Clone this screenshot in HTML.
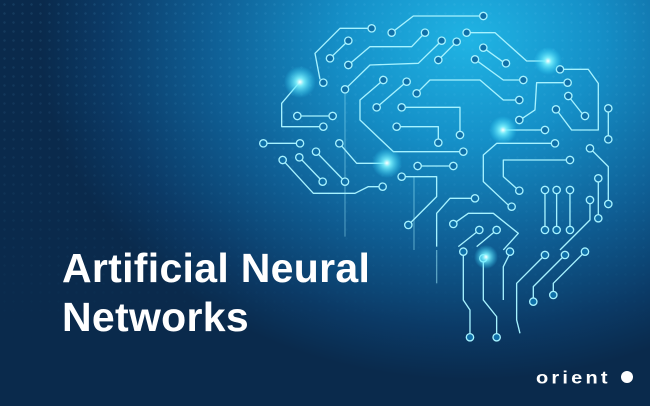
<!DOCTYPE html>
<html><head><meta charset="utf-8"><style>
html,body{margin:0;padding:0}
body{width:650px;height:406px;overflow:hidden;position:relative;font-family:"Liberation Sans",sans-serif;
background:radial-gradient(ellipse 430px 340px at 470px 40px,#20b4e4 0%,#1590c8 30%,#0f5f95 60%,#0b3a66 85%,#0a2a4c 100%),#0a2a4c;}
.dots{position:absolute;left:0;top:0;width:650px;height:406px;
background-image:radial-gradient(circle,rgba(120,210,255,.10) 1px,transparent 1.5px);background-size:9px 9px;
-webkit-mask-image:linear-gradient(180deg,#000 0%,rgba(0,0,0,.4) 60%,transparent 85%);}
svg{position:absolute;left:0;top:0}
.t{position:absolute;left:62px;color:#fff;font-weight:bold;font-size:41px;letter-spacing:0.3px;white-space:nowrap}
.logo{position:absolute;left:536px;top:367px;color:#fff;font-weight:bold;font-size:20px;letter-spacing:3.2px;transform:scaleY(0.9)}
.dot{position:absolute;left:621px;top:371px;width:12px;height:12px;border-radius:50%;background:#fff}
</style></head><body>
<div class="dots"></div>
<svg width="650" height="406" viewBox="0 0 650 406">
<defs>
<radialGradient id="g"><stop offset="0" stop-color="#fff"/><stop offset=".25" stop-color="#7ff4ff" stop-opacity=".9"/><stop offset="1" stop-color="#30d8ff" stop-opacity="0"/></radialGradient>
</defs>
<g transform="translate(250,0) scale(0.3333)" fill="none" stroke="#a6f2ff" stroke-width="4" stroke-linejoin="round">
<path d="M425,98 L490,48 L690,48"/>
<path d="M355,85 L270,85 L195,160 L210,238"/>
<path d="M295,122 L240,175"/>
<path d="M525,98 L485,140 L360,140 L295,195"/>
<path d="M575,122 L505,190 L360,195 L285,268"/>
<path d="M285,278 L285,710" stroke-opacity=".35"/>
<path d="M620,125 L565,180"/>
<path d="M660,98 L735,98 L830,183 L885,183"/>
<path d="M700,143 L765,190"/>
<path d="M675,178 L760,240 L810,240"/>
<path d="M940,208 L1015,208 L1045,250 L1045,390 L965,390 L920,330"/>
<path d="M945,248 L860,248 L855,330 L810,360"/>
<path d="M955,288 L1000,345"/>
<path d="M1075,325 L1075,415"/>
<path d="M150,245 L95,310 L95,380 L210,380"/>
<path d="M142,348 L245,348"/>
<path d="M40,430 L150,430"/>
<path d="M400,240 L330,300 L330,360 L430,455 L630,455"/>
<path d="M470,245 L380,322"/>
<path d="M500,280 L540,240 L690,240 L760,300 L800,300"/>
<path d="M455,322 L630,322 L630,400"/>
<path d="M440,380 L565,380 L565,425"/>
<path d="M760,390 L885,390"/>
<path d="M268,430 L320,490 L410,490"/>
<path d="M98,480 L190,580 L315,580 L355,560 L390,560"/>
<path d="M148,472 L218,545"/>
<path d="M198,455 L285,545"/>
<path d="M503,498 L610,498"/>
<path d="M455,530 L560,530 L560,590 L475,675"/>
<path d="M905,430 L740,430 L700,465 L700,545 L780,620"/>
<path d="M950,480 L760,480 L760,530 L805,570"/>
<path d="M1020,445 L1075,500 L1075,610"/>
<path d="M1045,535 L1045,655"/>
<path d="M885,570 L885,690 M920,570 L920,690 M960,570 L960,690"/>
<path d="M675,595 L600,595 L560,640 L560,740"/>
<path d="M610,672 L655,640 L730,640 L805,700 L760,750"/>
<path d="M688,690 L625,740 M740,690 L680,740"/>
<path d="M1020,600 L1020,660 L930,750"/>
<path d="M492,530 L492,750" stroke-opacity=".4"/>
<path d="M640,760 L640,900 L660,930 L660,1010"/>
<path d="M700,780 L700,900 L740,950 L740,1010"/>
<path d="M880,770 L800,850 L800,960 L810,1000"/>
<path d="M940,770 L850,860 L850,900"/>
<path d="M1000,760 L910,850 L910,880"/>
<path d="M780,760 L760,800 L760,900"/>
<path d="M560,750 L560,850" stroke-opacity=".5"/>
<g fill="#0f6fa8">
<circle cx="700" cy="48" r="11"/><circle cx="425" cy="98" r="11"/><circle cx="365" cy="85" r="11"/><circle cx="220" cy="248" r="11"/>
<circle cx="295" cy="122" r="11"/><circle cx="240" cy="175" r="11"/><circle cx="525" cy="98" r="11"/><circle cx="295" cy="195" r="11"/>
<circle cx="575" cy="122" r="11"/><circle cx="285" cy="268" r="11"/><circle cx="620" cy="125" r="11"/><circle cx="565" cy="180" r="11"/>
<circle cx="650" cy="98" r="11"/><circle cx="700" cy="143" r="11"/><circle cx="768" cy="190" r="11"/><circle cx="675" cy="178" r="11"/>
<circle cx="820" cy="240" r="11"/><circle cx="930" cy="208" r="11"/><circle cx="918" cy="328" r="11"/><circle cx="953" cy="248" r="11"/>
<circle cx="808" cy="360" r="11"/><circle cx="955" cy="288" r="11"/><circle cx="1005" cy="348" r="11"/><circle cx="1075" cy="325" r="11"/>
<circle cx="1075" cy="418" r="11"/><circle cx="220" cy="380" r="11"/><circle cx="142" cy="348" r="11"/><circle cx="248" cy="348" r="11"/>
<circle cx="40" cy="430" r="11"/><circle cx="150" cy="430" r="11"/><circle cx="400" cy="240" r="11"/><circle cx="640" cy="455" r="11"/>
<circle cx="470" cy="245" r="11"/><circle cx="380" cy="322" r="11"/><circle cx="500" cy="280" r="11"/><circle cx="808" cy="300" r="11"/>
<circle cx="455" cy="322" r="11"/><circle cx="630" cy="405" r="11"/><circle cx="440" cy="380" r="11"/><circle cx="565" cy="428" r="11"/>
<circle cx="885" cy="390" r="11"/><circle cx="268" cy="430" r="11"/><circle cx="98" cy="480" r="11"/><circle cx="398" cy="560" r="11"/>
<circle cx="148" cy="472" r="11"/><circle cx="218" cy="545" r="11"/><circle cx="198" cy="455" r="11"/><circle cx="285" cy="545" r="11"/>
<circle cx="503" cy="498" r="11"/><circle cx="610" cy="498" r="11"/><circle cx="455" cy="530" r="11"/><circle cx="475" cy="675" r="11"/>
<circle cx="915" cy="430" r="11"/><circle cx="785" cy="620" r="11"/><circle cx="960" cy="480" r="11"/><circle cx="808" cy="572" r="11"/>
<circle cx="1020" cy="445" r="11"/><circle cx="1075" cy="612" r="11"/><circle cx="1045" cy="535" r="11"/><circle cx="1045" cy="655" r="11"/>
<circle cx="885" cy="570" r="11"/><circle cx="885" cy="690" r="11"/><circle cx="920" cy="570" r="11"/><circle cx="920" cy="690" r="11"/>
<circle cx="960" cy="570" r="11"/><circle cx="960" cy="690" r="11"/><circle cx="675" cy="595" r="11"/><circle cx="610" cy="672" r="11"/>
<circle cx="688" cy="690" r="11"/><circle cx="740" cy="690" r="11"/><circle cx="1020" cy="600" r="11"/>
<circle cx="640" cy="755" r="11"/><circle cx="700" cy="775" r="11"/><circle cx="885" cy="765" r="11"/><circle cx="945" cy="765" r="11"/>
<circle cx="1005" cy="755" r="11"/><circle cx="780" cy="755" r="11"/><circle cx="850" cy="905" r="11"/><circle cx="910" cy="885" r="11"/>
<circle cx="660" cy="1012" r="11"/><circle cx="740" cy="1012" r="11"/>
</g>
</g>
<circle cx="300" cy="82" r="16" fill="url(#g)"/>
<circle cx="548" cy="61" r="14" fill="url(#g)"/>
<circle cx="503" cy="130" r="14" fill="url(#g)"/>
<circle cx="387" cy="163" r="15" fill="url(#g)"/>
<circle cx="486" cy="257" r="12" fill="url(#g)"/>
</svg>
<div class="t" style="top:245px">Artificial Neural</div>
<div class="t" style="top:294px">Networks</div>
<div class="logo">orient</div>
<div class="dot"></div>
</body></html>
